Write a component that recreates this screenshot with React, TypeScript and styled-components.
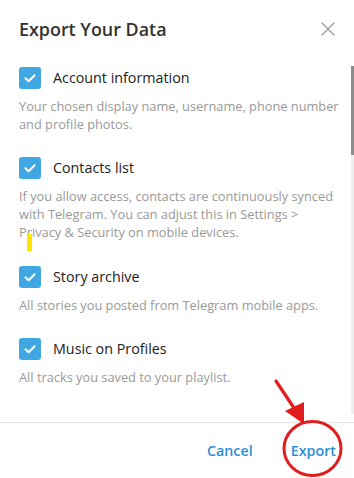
import React from 'react';
import styled, { createGlobalStyle } from 'styled-components';

const GlobalStyle = createGlobalStyle`
  html, body {
    margin: 0;
    padding: 0;
    background: #ffffff;
  }
  body {
    font-family: 'Open Sans', 'Noto Sans', sans-serif;
    -webkit-font-smoothing: antialiased;
  }
`;

interface Option {
  title: string;
  description: string;
}

const options: Option[] = [
  {
    title: 'Account information',
    description: 'Your chosen display name, username, phone number and profile photos.'
  },
  {
    title: 'Contacts list',
    description: 'If you allow access, contacts are continuously synced with Telegram. You can adjust this in Settings > Privacy & Security on mobile devices.'
  },
  {
    title: 'Story archive',
    description: 'All stories you posted from Telegram mobile apps.'
  },
  {
    title: 'Music on Profiles',
    description: 'All tracks you saved to your playlist.'
  }
];

function CheckIcon (): React.ReactElement {
  return (
    <svg width='22' height='22' viewBox='0 0 22 22' fill='none'>
      <path d='M6.5 11.3 L9.6 14.3 L15.6 8.2' stroke='#ffffff' strokeWidth='2' strokeLinecap='round' strokeLinejoin='round' />
    </svg>
  );
}

function CloseIcon (): React.ReactElement {
  return (
    <svg width='14' height='14' viewBox='0 0 14 14' fill='none'>
      <path d='M1 1 L13 13 M13 1 L1 13' stroke='#a3a3a3' strokeWidth='1.5' strokeLinecap='round' />
    </svg>
  );
}

function Annotations (): React.ReactElement {
  return (
    <Overlay width='354' height='478' viewBox='0 0 354 478'>
      <rect x='27' y='234' width='5' height='17' fill='#ffe400' />
      <line x1='276' y1='381' x2='298' y2='414' stroke='#e21d1d' strokeWidth='3.2' strokeLinecap='round' />
      <polygon points='285,411 304,424 304,402' fill='#e21d1d' />
      <ellipse cx='312.5' cy='448.5' rx='28.5' ry='27' stroke='#e21d1d' strokeWidth='3' fill='none' />
    </Overlay>
  );
}

export default function App (): React.ReactElement {
  return (
    <>
      <GlobalStyle />
      <Dialog>
        <Header>
          <Title>Export Your Data</Title>
          <CloseButton aria-label='Close'>
            <CloseIcon />
          </CloseButton>
        </Header>
        <Body>
          <List>
            {options.map((option) => (
              <Item key={option.title}>
                <CheckRow>
                  <Checkbox>
                    <CheckIcon />
                  </Checkbox>
                  <Label>{option.title}</Label>
                </CheckRow>
                <Description>{option.description}</Description>
              </Item>
            ))}
          </List>
          <ScrollTrack>
            <ScrollThumb />
          </ScrollTrack>
        </Body>
        <Footer>
          <TextButton>Cancel</TextButton>
          <TextButton>Export</TextButton>
        </Footer>
        <Annotations />
      </Dialog>
    </>
  );
}

const Dialog = styled.div`
  position: relative;
  display: flex;
  flex-direction: column;
  width: 354px;
  height: 478px;
  background: #ffffff;
  overflow: hidden;
`;

const Header = styled.div`
  display: flex;
  align-items: center;
  justify-content: space-between;
  height: 58px;
  padding: 0 16px 0 19px;
  box-sizing: border-box;
  flex: 0 0 auto;
`;

const Title = styled.h1`
  margin: 0;
  font-size: 17.9px;
  font-weight: 600;
  color: #333333;
  line-height: 24px;
`;

const CloseButton = styled.button`
  display: flex;
  align-items: center;
  justify-content: center;
  width: 20px;
  height: 20px;
  padding: 0;
  border: none;
  background: transparent;
  cursor: pointer;
`;

const Body = styled.div`
  display: flex;
  flex: 1 1 auto;
  min-height: 0;
`;

const List = styled.div`
  flex: 1 1 auto;
  display: flex;
  flex-direction: column;
  gap: 24px;
  padding: 9px 12px 0 19px;
  overflow: hidden;
`;

const Item = styled.div`
  display: flex;
  flex-direction: column;
  gap: 9px;
`;

const CheckRow = styled.div`
  display: flex;
  align-items: center;
  gap: 12px;
`;

const Checkbox = styled.span`
  display: flex;
  width: 22px;
  height: 22px;
  border-radius: 3px;
  background: #40a7e3;
  flex: 0 0 22px;
`;

const Label = styled.span`
  font-size: 14.3px;
  color: #222222;
  line-height: 20px;
`;

const Description = styled.p`
  margin: 0;
  font-size: 12.8px;
  line-height: 17.7px;
  color: #999999;
`;

const ScrollTrack = styled.div`
  flex: 0 0 3px;
  margin: 8px 0 8px;
  background: #efefef;
`;

const ScrollThumb = styled.div`
  height: 89px;
  background: #8c8c8c;
`;

const Footer = styled.div`
  display: flex;
  align-items: center;
  justify-content: flex-end;
  gap: 38px;
  height: 55px;
  padding: 0 18px 0 0;
  border-top: 1px solid #e6e6e6;
  flex: 0 0 auto;
  box-sizing: content-box;
`;

const TextButton = styled.button`
  padding: 0;
  border: none;
  background: transparent;
  font-family: 'Open Sans', 'Noto Sans', sans-serif;
  font-size: 14.3px;
  font-weight: 600;
  color: #2b8fd6;
  cursor: pointer;
`;

const Overlay = styled.svg`
  position: absolute;
  top: 0;
  left: 0;
  pointer-events: none;
`;
